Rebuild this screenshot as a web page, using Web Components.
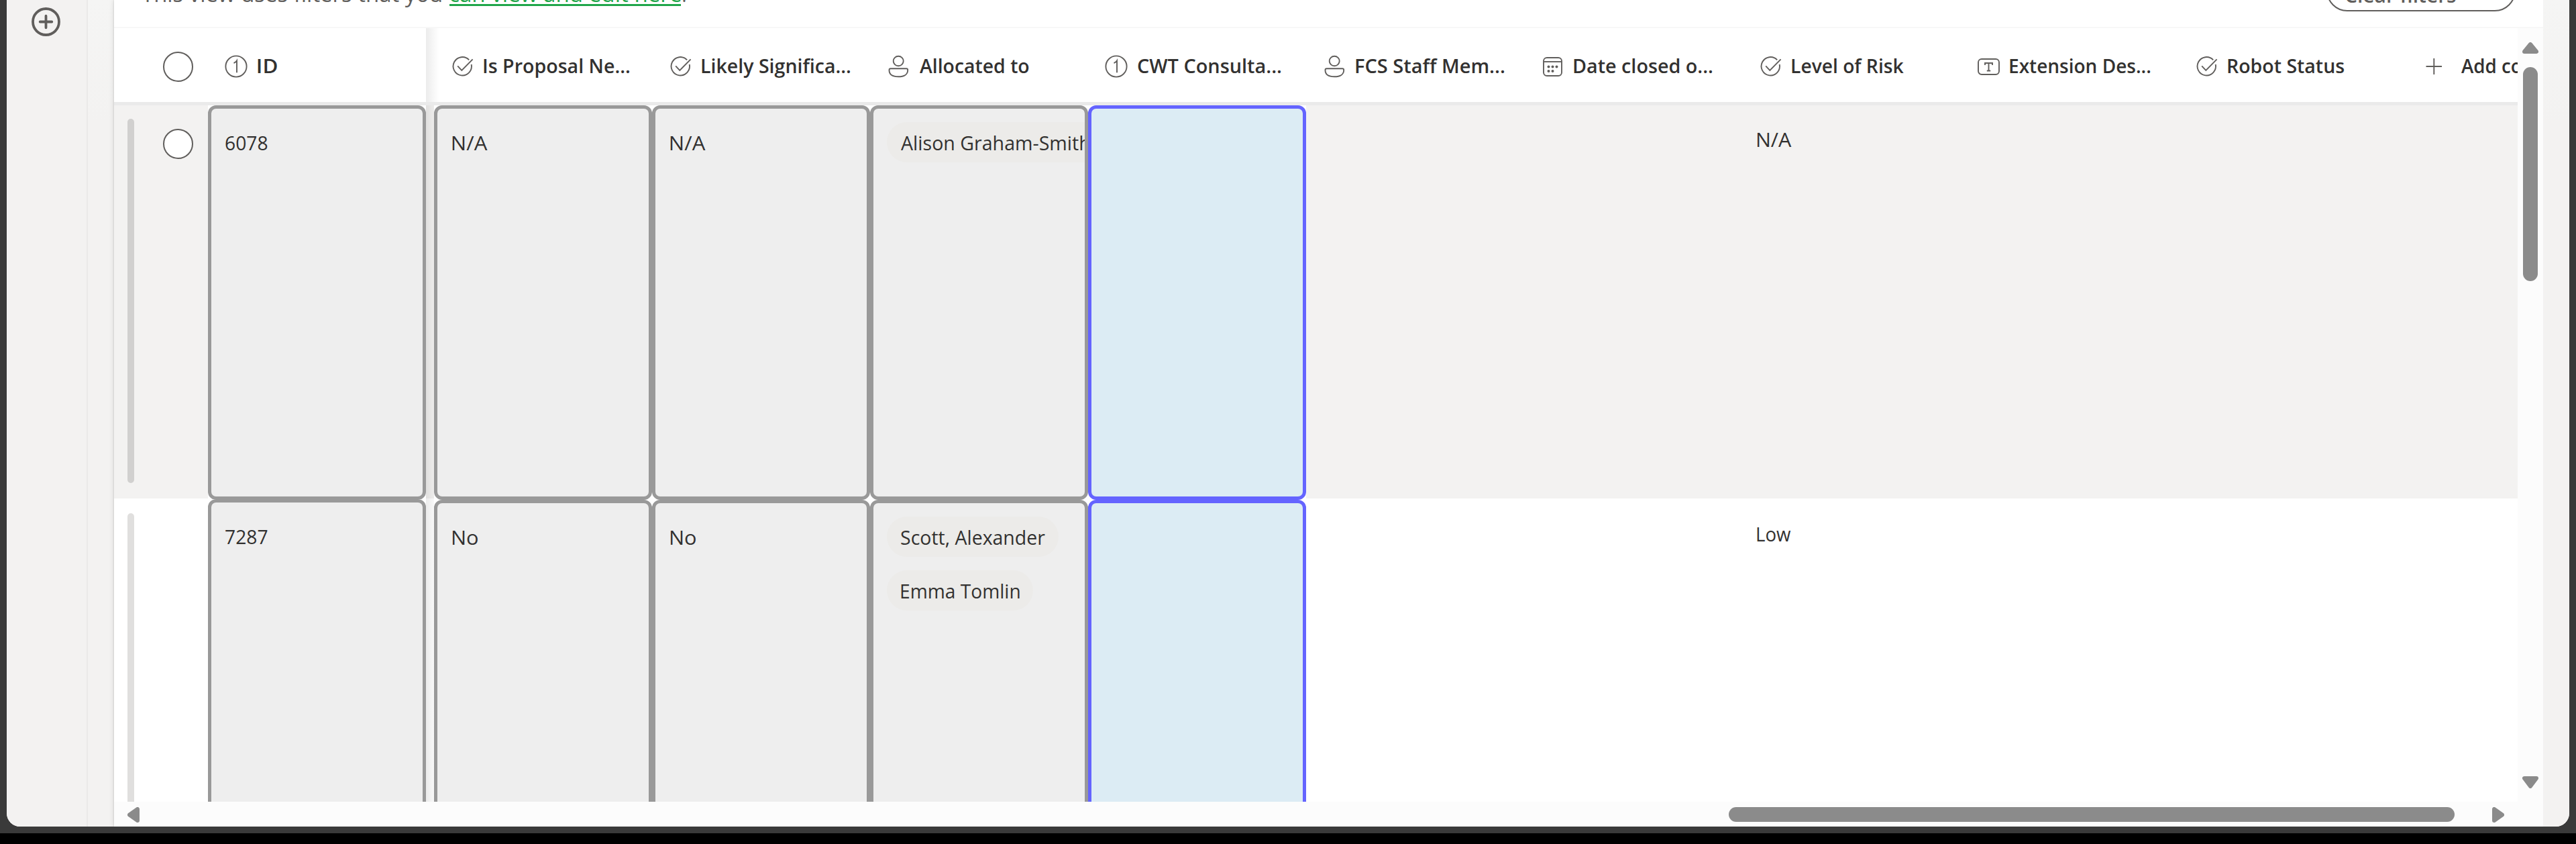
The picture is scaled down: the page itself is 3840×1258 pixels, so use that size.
<!DOCTYPE html>
<html lang="en">
<head>
<meta charset="utf-8">
<title>List view</title>
<style>
html,body{margin:0;padding:0;background:#000}
body{width:3840px;height:1258px;overflow:hidden;font-family:"Open Sans","Noto Sans",sans-serif;font-size:29px;color:#323130}
</style>
</head>
<body>
<app-window>
  <side-bar slot="side"></side-bar>
  <filter-bar slot="top">
    <fit-text w="447" size="33">This view uses filters that you</fit-text>
    <fit-text slot="link" w="345" size="33">can view and edit here</fit-text>
    <fit-text slot="end" w="4" size="33">.</fit-text>
    <fit-text slot="button" w="165" size="30">Clear filters</fit-text>
  </filter-bar>
  <list-header slot="grid">
    <col-head slot="id" icon="number"><fit-text w="29">ID</fit-text></col-head>
    <col-head icon="check"><fit-text w="218">Is Proposal Ne...</fit-text></col-head>
    <col-head icon="check"><fit-text w="222">Likely Significa...</fit-text></col-head>
    <col-head icon="person"><fit-text w="163">Allocated to</fit-text></col-head>
    <col-head icon="number"><fit-text w="214">CWT Consulta...</fit-text></col-head>
    <col-head icon="person"><fit-text w="222">FCS Staff Mem...</fit-text></col-head>
    <col-head icon="calendar"><fit-text w="207">Date closed o...</fit-text></col-head>
    <col-head icon="check"><fit-text w="167">Level of Risk</fit-text></col-head>
    <col-head icon="text"><fit-text w="210">Extension Des...</fit-text></col-head>
    <col-head icon="check"><fit-text w="173">Robot Status</fit-text></col-head>
    <col-head icon="plus"><fit-text w="90">Add co</fit-text></col-head>
  </list-header>
  <list-row slot="grid" shaded>
    <grid-cell slot="id" kind="locked"><fit-text w="63">6078</fit-text></grid-cell>
    <grid-cell kind="locked"><fit-text w="53">N/A</fit-text></grid-cell>
    <grid-cell kind="locked"><fit-text w="53">N/A</fit-text></grid-cell>
    <grid-cell kind="locked" people><person-pill><fit-text w="281">Alison Graham-Smith</fit-text></person-pill></grid-cell>
    <grid-cell kind="active"></grid-cell>
    <grid-cell></grid-cell>
    <grid-cell></grid-cell>
    <grid-cell><fit-text w="52">N/A</fit-text></grid-cell>
  </list-row>
  <list-row slot="grid">
    <grid-cell slot="id" kind="locked" style="margin-top:-1px"><fit-text w="63">7287</fit-text></grid-cell>
    <grid-cell kind="locked"><fit-text w="38">No</fit-text></grid-cell>
    <grid-cell kind="locked"><fit-text w="38">No</fit-text></grid-cell>
    <grid-cell kind="locked" people>
      <person-pill><fit-text w="215">Scott, Alexander</fit-text></person-pill>
      <person-pill><fit-text w="177">Emma Tomlin</fit-text></person-pill>
    </grid-cell>
    <grid-cell kind="active"></grid-cell>
    <grid-cell></grid-cell>
    <grid-cell></grid-cell>
    <grid-cell><fit-text w="51">Low</fit-text></grid-cell>
  </list-row>
</app-window>

<script>
const define = (name, html, ready) => customElements.define(name, class extends HTMLElement {
  connectedCallback() {
    if (this.shadowRoot) return;
    this.attachShadow({ mode: 'open' }).innerHTML = html;
    if (ready) ready(this, this.shadowRoot);
  }
});

define('scroll-bar', `
<style>
:host{display:flex;box-sizing:border-box;background:#fcfcfc;flex:none}
:host([axis=y]){flex-direction:column;align-items:center;width:38px;height:1153px;padding:21px 0 20px}
:host([axis=x]){align-items:center;width:3621px;height:37px;padding:2px 58px 0 20px}
svg{display:block;fill:#8b8b8b;stroke:#8b8b8b;stroke-width:6;stroke-linejoin:round;flex:none}
i{display:block;background:#8b8b8b;border-radius:11px}
:host([axis=y]) i{width:22px;height:319px;margin:20px 0 auto}
:host([axis=x]) i{width:1082px;height:22px;margin:-1px 56px 0 auto}
:host([axis=x]) .y,:host([axis=y]) .x{display:none}
</style>
<svg class="y" width="24" height="17"><path d="M12 3 21 14H3Z"/></svg>
<svg class="x" width="18" height="23"><path d="M3 11.500 15 3V20Z"/></svg>
<i></i>
<svg class="y" width="24" height="18"><path d="M3 3H21L12 15Z"/></svg>
<svg class="x" width="18" height="23"><path d="M3 3V20L15 11.500Z"/></svg>`);

define('side-bar', `
<style>
:host{display:flex;box-sizing:border-box;width:121px;height:1232px;border-right:2px solid #eae9e8;background:#f3f2f1;padding:11px 0 0 37px}
</style>
<svg width="43" height="43" fill="none" stroke="#605e5c" stroke-width="3.800" stroke-linecap="round"><circle cx="21.500" cy="21.500" r="19.500"/><path d="M21.500 12.700V30.300M12.700 21.500H30.300"/></svg>`);

define('app-window', `
<style>
:host{display:block;height:1242px;background:#3a3a3a;padding-left:10px;box-sizing:border-box;overflow:hidden}
.win{display:flex;width:3820px;height:1232px;border-radius:0 0 20px 20px;overflow:hidden;background:#f3f2f1}
.gut{flex:none;width:39px;background:linear-gradient(#f5f5f4 0,#f3f2f1 180px)}
.card{width:3621px;height:1232px;background:#fff;flex:none;box-shadow:0 0 8px rgba(0,0,0,.13),0 0 2px rgba(0,0,0,.16)}
.body{display:flex}
.grid{width:3583px;height:1153px;overflow:hidden;flex:none}
</style>
<div class="win"><slot name="side"></slot><div class="gut"></div>
<div class="card"><slot name="top"></slot><div class="body"><div class="grid"><slot name="grid"></slot></div><scroll-bar axis="y"></scroll-bar></div><scroll-bar axis="x"></scroll-bar></div>
<div class="gut"></div></div>`);

define('filter-bar', `
<style>
:host{display:flex;box-sizing:border-box;height:42px;overflow:hidden;padding:0 41px 0 41px;border-bottom:2px solid #f7f7f7;color:#605e5c}
.msg{display:flex;margin-top:-29px}
a{display:block;height:35px;border-bottom:3px solid #1fa64a;color:#1fa64a;margin:0 3px 0 12px}
button{all:unset;display:block;box-sizing:border-box;width:282px;height:64px;border:2px solid #605e5c;border-radius:31px;margin:-47px 0 0 auto;padding:16px 0 0 26px;font-weight:600}
</style>
<div class="msg"><slot></slot><a><slot name="link"></slot></a><slot name="end"></slot></div>
<button><slot name="button"></slot></button>`);

define('check-ring', `
<style>:host{display:block;box-sizing:border-box;width:45px;height:45px;border:2px solid #605e5c;border-radius:50%;background:#fff;flex:none}</style>`);

define('freeze-edge', `
<style>:host{display:block;position:relative;width:12px;flex:none}
:host::before{content:"";position:absolute;inset:0 auto 0 0;width:20px;background:linear-gradient(90deg,rgba(0,0,0,.08),rgba(0,0,0,.035) 50%,transparent)}</style>`);

define('list-header', `
<style>
:host{display:flex;box-sizing:border-box;width:4000px;height:115px;border-bottom:5px solid #eaeaea;font-weight:600}
.sel{width:67px;padding:35px 0 0 73px;flex:none}
</style><div class="sel"><check-ring></check-ring></div><slot name="id"></slot><freeze-edge></freeze-edge><slot></slot>`);

const icons = {
  number: '<circle cx="17" cy="18" r="15.600"/><path d="M13.500 13Q16.500 12 18 9.500V27.300"/>',
  check: '<path d="M27.200 8.300A13.700 13.700 0 1 0 30.700 15"/><path d="M10.200 17.300 16.300 23.800 32.600 7.400"/>',
  person: '<ellipse cx="17.200" cy="10" rx="7.500" ry="7.300"/><path d="M5.500 21.200H29.200Q31.200 21.200 31.200 23.500C31.200 30 25.500 33.300 17.200 33.300S3.500 30 3.500 23.500Q3.500 21.200 5.500 21.200Z"/>',
  calendar: '<rect x="4" y="5" width="27" height="27" rx="5"/><path d="M4 11H31"/><g fill="currentColor" stroke="none"><circle cx="11.500" cy="18.500" r="2"/><circle cx="17.500" cy="18.500" r="2"/><circle cx="23.500" cy="18.500" r="2"/><circle cx="11.500" cy="25" r="2"/><circle cx="17.500" cy="25" r="2"/></g>',
  text: '<rect x="2" y="7" width="31" height="23" rx="5"/><path d="M12 16V13H23V16M17.500 13V24.500M14.800 24.500H20.200"/>',
  plus: '<path d="M19.500 18H43M31.300 6V30"/>'
};
define('col-head', `
<style>
:host{display:flex;align-items:center;box-sizing:border-box;width:325px;height:110px;padding:4px 0 0 25px;flex:none}
svg{color:#605e5c;margin-right:15px;flex:none;overflow:visible}
::slotted(fit-text){margin-top:-2px}
:host([icon=plus]) svg{margin-right:38px}
</style><svg width="34" height="36" fill="none" stroke="currentColor" stroke-width="1.900"></svg><slot></slot>`,
(el, root) => { root.querySelector('svg').innerHTML = icons[el.getAttribute('icon')]; });

define('list-row', `
<style>
:host{display:flex;width:4000px;height:588px;background:#fff}
:host([shaded]){background:linear-gradient(#f3f2f1 586px,#fff 586px)}
.pre{display:flex;box-sizing:border-box;width:140px;padding:20px 0 0 20px;flex:none}
i{display:block;width:10px;height:543px;border-radius:5px;background:#e0dfde}
:host([shaded]) i{background:#d1d0cf}
check-ring{display:none;margin:15px 0 0 43px}
:host([shaded]) check-ring{display:block}
</style><div class="pre"><i></i><check-ring></check-ring></div><slot name="id"></slot><freeze-edge></freeze-edge><slot></slot>`);

define('grid-cell', `
<style>
:host{display:block;position:relative;box-sizing:border-box;width:325px;height:588px;flex:none}
.box{box-sizing:border-box;height:588px;padding:31px 0 0 22px;overflow:hidden}
:host([kind]){background:#fff}
:host([kind]) .box{border:5px solid #999;border-radius:12px;background:#eee;padding:31px 0 0 22px}
:host([slot=id]) .box{padding-left:21px}
:host([kind=active]) .box{border-color:#6464ff;background:#dcecf4}
:host([people]) .box{display:flex;flex-direction:column;align-items:flex-start;gap:20px;padding:20px 0 0 20px}
</style><div class="box"><slot></slot></div>`);

define('person-pill', `
<style>:host{display:block;box-sizing:border-box;height:60px;border-radius:30px;padding:11px 20px 0 21px;background:#ecebe9;flex:none}</style><slot></slot>`);

// A single line of text whose inked width is fitted to the w attribute.
// Registered last, so that the inherited font weight is already in force when it measures.
define('fit-text', `
<style>
:host{display:block;white-space:nowrap;line-height:40px;flex:none}
span{display:inline-block;transform-origin:0 50%}
</style><span><slot></slot></span>`, (el, root) => {
  const w = +el.getAttribute('w');
  if (el.hasAttribute('size')) el.style.fontSize = el.getAttribute('size') + 'px';
  el.style.width = w + 'px';
  const cs = getComputedStyle(el);
  const ctx = document.createElement('canvas').getContext('2d');
  ctx.font = `${cs.fontWeight} ${cs.fontSize} ${cs.fontFamily}`;
  const m = ctx.measureText(el.textContent.trim());
  const s = w / (m.actualBoundingBoxRight + m.actualBoundingBoxLeft);
  root.querySelector('span').style.transform = `translateX(${m.actualBoundingBoxLeft * s}px) scaleX(${s})`;
});
</script>
</body>
</html>
